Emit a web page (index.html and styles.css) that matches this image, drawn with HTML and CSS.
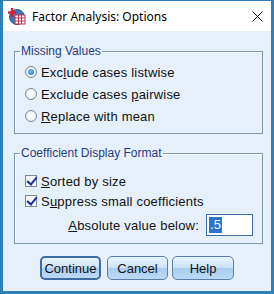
FILE: index.html
```html
<!DOCTYPE html>
<html lang="en">
<head>
<meta charset="UTF-8" />
<title>Factor Analysis: Options</title>
<link rel="stylesheet" href="styles.css">
</head>
<body>
  <div class="window">
    <div class="titlebar">
      <svg class="app-icon" width="18" height="18" viewBox="0 0 18 18">
        <circle cx="9" cy="10" r="7.5" fill="#3f78b8" stroke="#2a5a90" stroke-width="1"/>
        <rect x="7" y="8" width="10" height="9" fill="#fff" stroke="#c0304a" stroke-width="1"/>
        <path d="M7 11h10M7 14h10M10.5 8v9M13.5 8v9" stroke="#c0304a" stroke-width="1"/>
        <path d="M4 1v9M0 5.5h8" stroke="#d3203a" stroke-width="2.4"/>
      </svg>
      <span class="title">Factor Analysis: Options</span>
      <span class="close">
        <svg width="11" height="11" viewBox="0 0 11 11"><path d="M0.5 0.5l10 10M10.5 0.5l-10 10" stroke="#111" stroke-width="1"/></svg>
      </span>
    </div>
    <div class="content">
      <fieldset class="group">
        <legend>Missing Values</legend>
        <label class="row"><span class="radio checked"></span><span>Exc<u>l</u>ude cases listwise</span></label>
        <label class="row"><span class="radio"></span><span>Exclude cases <u>p</u>airwise</span></label>
        <label class="row"><span class="radio"></span><span><u>R</u>eplace with mean</span></label>
      </fieldset>
      <fieldset class="group group-coef">
        <legend>Coefficient Display Format</legend>
        <label class="row"><span class="check"></span><span><u>S</u>orted by size</span></label>
        <label class="row"><span class="check"></span><span>S<u>u</u>ppress small coefficients</span></label>
        <div class="abs-row">
          <span><u>A</u>bsolute value below:</span>
          <span class="value"><span class="sel">.5</span></span>
        </div>
      </fieldset>
      <div class="buttons">
        <button class="btn btn-continue">Continue</button>
        <button class="btn btn-cancel">Cancel</button>
        <button class="btn btn-help">Help</button>
      </div>
    </div>
  </div>
</body>
</html>
```

FILE: styles.css
```css
* {
  box-sizing: border-box;
}
body {
  margin: 0;
  font-family: "Liberation Sans", Arial, sans-serif;
  font-size: 12px;
  color: #111;
}
.window {
  width: 274px;
  height: 294px;
  border: 1px solid #2f7fb8;
  border-width: 1px 3px 3px 3px;
  background: #e6f0fa;
  display: flex;
  flex-direction: column;
}
.titlebar {
  height: 30px;
  background: #fff;
  display: flex;
  align-items: center;
  padding: 0 0 0 5px;
  flex-shrink: 0;
}
.app-icon {
  margin-right: 6px;
  margin-top: -1px;
}
.title {
  font-family: "Noto Sans", "Open Sans", sans-serif;
  font-size: 12px;
  flex: 1;
  color: #000;
}
.close {
  width: 28px;
  display: flex;
  justify-content: center;
}
.content {
  padding: 13px 8px 0 11px;
  display: flex;
  flex-direction: column;
}
.group {
  margin: 0;
  padding: 6px 0 9px 10px;
  border: 1px solid #7e98ac;
  box-shadow: inset 1px 1px 0 #fff;
  display: flex;
  flex-direction: column;
  gap: 6px;
}
.group legend {
  color: #1f3b80;
  padding: 0 1px;
  margin-left: -5px;
  line-height: 14px;
}
.row {
  display: flex;
  align-items: center;
  height: 16px;
  font-size: 13px;
  letter-spacing: 0.2px;
}
.radio {
  width: 12px;
  height: 12px;
  border-radius: 50%;
  border: 1px solid #7a8a99;
  background: radial-gradient(circle, #fff 0%, #e4e8ec 100%);
  margin-right: 4px;
  position: relative;
}
.radio.checked::after {
  content: "";
  position: absolute;
  left: 2px;
  top: 2px;
  width: 6px;
  height: 6px;
  border-radius: 50%;
  background: radial-gradient(circle at 40% 40%, #7fc0f5 0%, #1c6cc0 100%);
}
.group-coef {
  margin-top: 12px;
  padding-top: 13px;
  padding-bottom: 7px;
  gap: 4px;
}
.check {
  width: 12px;
  height: 12px;
  border: 1px solid #7a8a99;
  background: linear-gradient(135deg, #f0f0f0, #fff);
  margin-right: 4px;
  position: relative;
}
.check::after {
  content: "";
  position: absolute;
  left: 3px;
  top: -1px;
  width: 4px;
  height: 8px;
  border: solid #1a2fa0;
  border-width: 0 2px 2px 0;
  transform: rotate(40deg);
}
.abs-row {
  display: flex;
  align-items: center;
  justify-content: flex-end;
  font-size: 13px;
  letter-spacing: 0.2px;
  padding-right: 9px;
  gap: 7px;
  margin-top: 1px;
}
.value {
  width: 47px;
  height: 22px;
  background: #fff;
  border: 1px solid #3a6ea5;
  display: flex;
  align-items: center;
  padding-left: 2px;
}
.sel {
  background: #2a74d0;
  color: #fff;
  line-height: 16px;
  padding: 0 1px;
}
.buttons {
  display: flex;
  margin-top: 12px;
  padding-left: 26px;
}
.btn {
  height: 24px;
  font-family: "Liberation Sans", Arial, sans-serif;
  font-size: 13px;
  color: #111;
  border: 1px solid #5a7fa6;
  border-radius: 5px;
  background: linear-gradient(#eaf4fd 0%, #c9e1f7 50%, #a8cdf0 51%, #bcdaf5 100%);
  padding: 0;
}
.btn-continue {
  width: 61px;
  border: 2px solid #3c6d9e;
}
.btn-cancel {
  width: 61px;
  margin-left: 6px;
}
.btn-help {
  width: 62px;
  margin-left: 4px;
}
```
